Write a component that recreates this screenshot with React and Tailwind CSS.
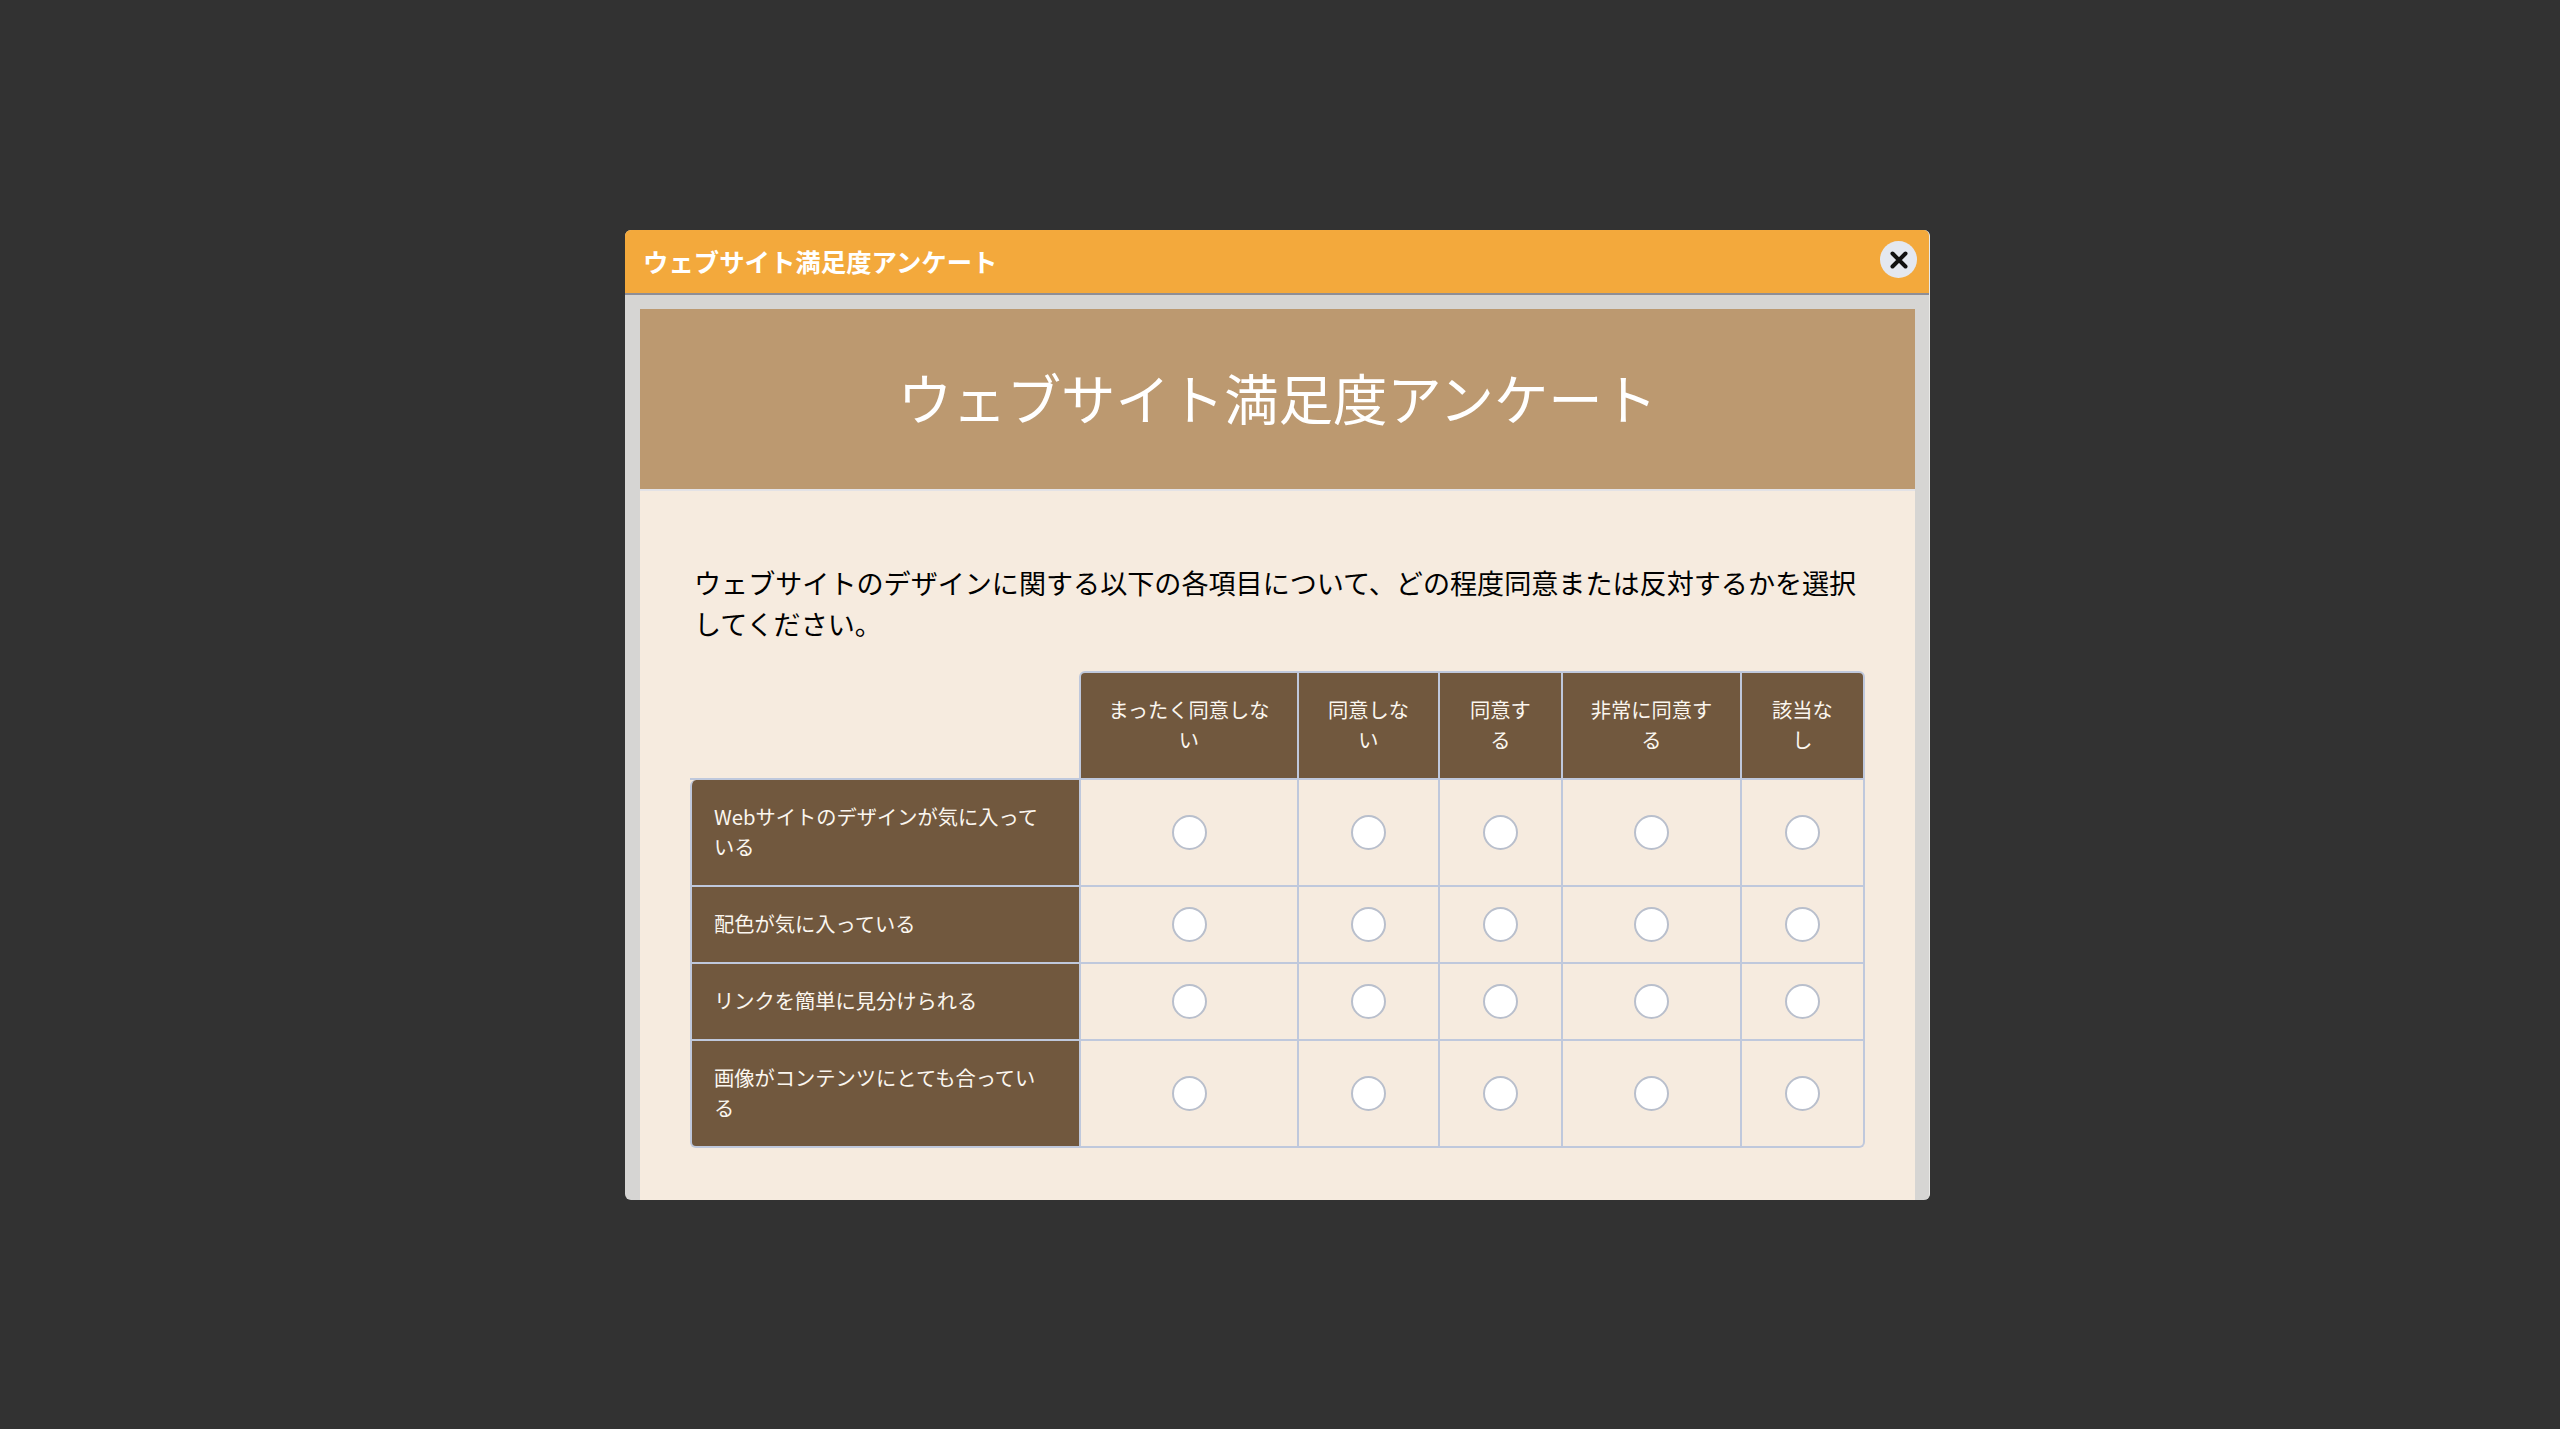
const columns = ['まったく同意しない', '同意しない', '同意する', '非常に同意する', '該当なし'];
const rows = [
  'Webサイトのデザインが気に入っている',
  '配色が気に入っている',
  'リンクを簡単に見分けられる',
  '画像がコンテンツにとても合っている',
];

function Radio({ name }) {
  return (
    <input
      type="radio"
      name={name}
      className="block mx-auto appearance-none w-[35px] h-[35px] rounded-full bg-white border-2 border-[#b9bfcc]"
    />
  );
}

export default function App() {
  return (
    <div className="min-h-[1429px] bg-[#323232] flex items-center justify-center pr-[5px] font-['Noto_Sans_CJK_JP','Noto_Sans',sans-serif]">
      <div className="w-[1305px] h-[970px] flex flex-col overflow-hidden rounded-[6px] bg-[#d6d5d3] border-r border-[#e9e9e7]">
        <div className="h-[65px] shrink-0 flex items-center justify-between pl-[18px] pr-[12px] bg-[#f3a93c] border-b-2 border-[#8e8e96]">
          <span className="text-[25.4px] font-bold text-white">ウェブサイト満足度アンケート</span>
          <button className="w-[37px] h-[37px] mb-[3px] rounded-full bg-[#e4e8f0] flex items-center justify-center">
            <svg width="20" height="20" viewBox="0 0 20 20" fill="none" stroke="#111" strokeWidth="4" strokeLinecap="round">
              <path d="M3.5 3.5 16.5 16.5M16.5 3.5 3.5 16.5" />
            </svg>
          </button>
        </div>
        <div className="flex-1 min-h-0 mt-[14px] ml-[15px] mr-[14px] flex flex-col overflow-hidden">
          <div className="h-[182px] shrink-0 flex items-center justify-center pb-[3px] bg-[#bc9970] border-b-2 border-[#e3e2e6]">
            <h1 className="text-[54.4px] font-normal text-white">ウェブサイト満足度アンケート</h1>
          </div>
          <div className="flex-1 bg-[#f6ebdf] pt-[71px] pl-[50px] pr-[48px]">
            <p className="pl-[4px] text-[27.08px] leading-[41px] text-black">
              ウェブサイトのデザインに関する以下の各項目について、どの程度同意または反対するかを選択してください。
            </p>
            <table className="mt-[27px] w-[1175px] table-fixed border-separate border-spacing-0 text-[20.25px] leading-[30px]">
              <colgroup>
                <col className="w-[389px]" />
                <col className="w-[220px]" />
                <col className="w-[141px]" />
                <col className="w-[123px]" />
                <col className="w-[179px]" />
                <col className="w-[123px]" />
              </colgroup>
              <thead>
                <tr>
                  <td className="border-b-2 border-[#bfc8dc]"></td>
                  {columns.map((c, i) => (
                    <th
                      key={c}
                      className={`px-[23px] py-[22.5px] font-normal text-center text-[#fbf6ef] bg-[#71583e] border-t-2 border-r-2 border-b-2 border-[#bfc8dc] ${i === 0 ? 'border-l-2 rounded-tl-[6px]' : ''} ${i === columns.length - 1 ? 'rounded-tr-[6px]' : ''}`}
                    >
                      {c}
                    </th>
                  ))}
                </tr>
              </thead>
              <tbody>
                {rows.map((r, ri) => (
                  <tr key={r}>
                    <th
                      className={`pl-[22px] pr-[25px] py-[22.5px] font-normal text-left text-[#fbf6ef] bg-[#71583e] border-l-2 border-b-2 border-[#bfc8dc] ${ri === 0 ? 'rounded-tl-[6px]' : ''} ${ri === rows.length - 1 ? 'rounded-bl-[6px]' : ''}`}
                    >
                      {r}
                    </th>
                    {columns.map((c, ci) => (
                      <td
                        key={c}
                        className={`border-r-2 border-b-2 border-[#bfc8dc] ${ci === 0 ? 'border-l-2' : ''} ${ri === rows.length - 1 && ci === columns.length - 1 ? 'rounded-br-[6px]' : ''}`}
                      >
                        <Radio name={`row-${ri}`} />
                      </td>
                    ))}
                  </tr>
                ))}
              </tbody>
            </table>
          </div>
        </div>
      </div>
    </div>
  );
}
